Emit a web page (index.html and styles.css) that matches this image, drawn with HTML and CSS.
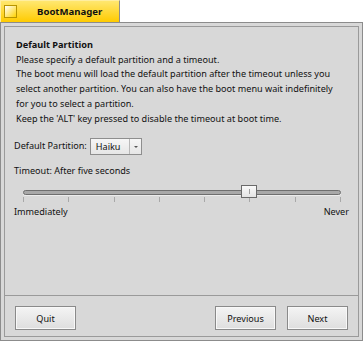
FILE: index.html
```
<!DOCTYPE html>
<html lang="en">
<head>
    <meta charset="UTF-8">
    <meta name="viewport" content="width=device-width, initial-scale=1.0">
    <title>BootManager</title>
    <link rel="stylesheet" href="styles.css">
</head>
<body>
    <div class="window">
        <div class="tab">
            <span class="close-box"></span>
            <span class="title">BootManager</span>
        </div>
        <div class="frame">
            <div class="client">
                <div class="page">
                    <h1 class="heading">Default Partition</h1>
                    <p class="description">
                        Please specify a default partition and a timeout.<br>
                        The boot menu will load the default partition after the timeout unless you<br>
                        select another partition. You can also have the boot menu wait indefinitely<br>
                        for you to select a partition.<br>
                        Keep the 'ALT' key pressed to disable the timeout at boot time.
                    </p>
                    <div class="field-row">
                        <span class="field-label">Default Partition:</span>
                        <div class="menu-field">
                            <span class="menu-value">Haiku</span>
                            <span class="menu-arrow"></span>
                        </div>
                    </div>
                    <div class="timeout-label">Timeout: After five seconds</div>
                    <div class="slider">
                        <div class="slider-bar">
                            <div class="slider-track"></div>
                            <div class="slider-thumb" style="left: 218px;"><span class="grip"></span></div>
                        </div>
                        <div class="ticks">
                            <span></span><span></span><span></span><span></span>
                            <span></span><span></span><span></span><span></span>
                        </div>
                    </div>
                    <div class="limits">
                        <span>Immediately</span>
                        <span>Never</span>
                    </div>
                </div>
                <div class="button-bar">
                    <button class="push-button">Quit</button>
                    <span class="spacer"></span>
                    <button class="push-button">Previous</button>
                    <button class="push-button">Next</button>
                </div>
            </div>
        </div>
    </div>
</body>
</html>
```

FILE: styles.css
```
body {
    margin: 0;
    background-color: #ffffff;
    font-family: 'Noto Sans', sans-serif;
    font-size: 9.1px;
    color: #111;
}
.window {
    width: 363px;
    height: 341px;
    display: flex;
    flex-direction: column;
}
.tab {
    width: 120px;
    height: 22px;
    box-sizing: border-box;
    display: flex;
    align-items: center;
    background: linear-gradient(#ffe770, #ffcb00);
    border-right: 1px solid #8c8c8c;
    border-left: 1px solid #ffeea0;
    border-top: 1px solid #ffeea0;
}
.close-box {
    width: 13px;
    height: 13px;
    box-sizing: border-box;
    margin-left: 3px;
    border: 1px solid #b89400;
    background: linear-gradient(135deg, #ffffff, #ffd200);
}
.title {
    font-weight: bold;
    font-size: 9.6px;
    margin-left: 20px;
    color: #111;
}
.frame {
    flex: 1;
    display: flex;
    box-sizing: border-box;
    border: 1px solid #8c8c8c;
    padding: 3px;
    background-color: #d8d8d8;
}
.client {
    flex: 1;
    display: flex;
    flex-direction: column;
    border: 1px solid #9a9a9a;
    background-color: #d8d8d8;
}
.page {
    flex: 1;
    padding: 11px 9px 0 9px;
    border-bottom: 1px solid #9a9a9a;
    line-height: 14.7px;
}
.heading {
    margin: 0;
    padding-left: 2px;
    font-size: 9.2px;
    font-weight: bold;
}
.description {
    margin: 0;
    padding-left: 2px;
}
.field-row {
    display: flex;
    align-items: center;
    margin-top: 12px;
    height: 17px;
}
.field-label {
    margin-right: 3px;
}
.menu-field {
    width: 52px;
    height: 17px;
    box-sizing: border-box;
    display: flex;
    border: 1px solid #8e8e8e;
    background: linear-gradient(#f6f6f6, #e6e6e6);
}
.menu-value {
    flex: 1;
    padding-left: 5px;
    line-height: 15px;
}
.menu-arrow {
    width: 11px;
    border-left: 1px solid #b8b8b8;
    position: relative;
}
.menu-arrow::after {
    content: "";
    position: absolute;
    left: 4px;
    top: 7px;
    border-left: 2px solid transparent;
    border-right: 2px solid transparent;
    border-top: 2px solid #555;
}
.timeout-label {
    margin-top: 9px;
}
.slider {
    margin: 6px 8px 0 9px;
}
.slider-bar {
    position: relative;
    height: 12px;
    padding-top: 5px;
    box-sizing: border-box;
}
.slider-track {
    height: 5px;
    box-sizing: border-box;
    border: 1px solid #6e6e6e;
    border-radius: 3px;
    background-color: #a8a8a8;
    box-shadow: 0 1px 0 #ececec;
}
.slider-thumb {
    position: absolute;
    top: 0;
    width: 16px;
    height: 13px;
    box-sizing: border-box;
    border: 1px solid #6a6a6a;
    background: linear-gradient(#fafafa, #e4e4e4);
    display: flex;
    justify-content: center;
    padding-top: 3px;
}
.grip {
    width: 1px;
    height: 5px;
    background-color: #a0a0a0;
}
.ticks {
    display: flex;
    justify-content: space-between;
    height: 5px;
}
.ticks span {
    width: 1px;
    background-color: #a8a8a8;
}
.limits {
    display: flex;
    justify-content: space-between;
    margin-top: 3px;
}
.button-bar {
    height: 40px;
    box-sizing: border-box;
    display: flex;
    align-items: flex-start;
    gap: 11px;
    padding: 10px 10px 0 10px;
}
.spacer {
    flex: 1;
}
.push-button {
    width: 61px;
    height: 24px;
    font-family: inherit;
    font-size: 9.1px;
    color: #111;
    border: 1px solid #8a8a8a;
    background: linear-gradient(#f4f4f4, #dedede);
    box-shadow: inset 0 0 0 1px #f8f8f8;
    padding: 0;
}
```
